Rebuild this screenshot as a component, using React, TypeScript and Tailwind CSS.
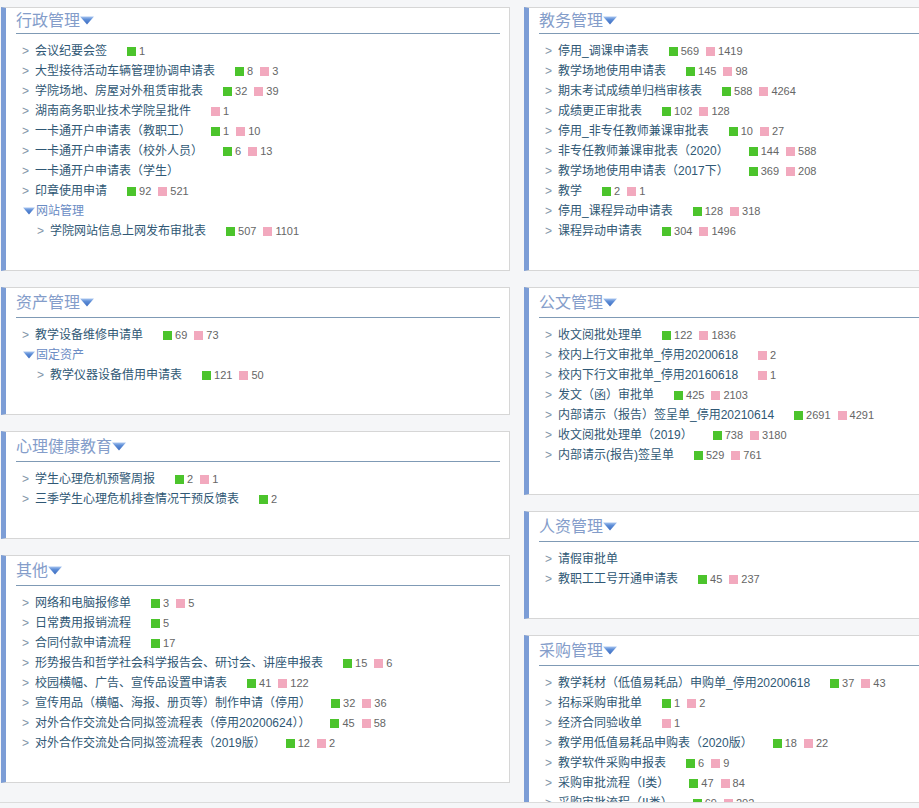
import React from 'react'

type Item = { name: string; g?: number; p?: number }
type Group = { group: string; items: Item[] }
type Entry = Item | Group

type Section = { title: string; entries: Entry[] }

const leftSections: Section[] = [
  {
    title: '行政管理',
    entries: [
      { name: '会议纪要会签', g: 1 },
      { name: '大型接待活动车辆管理协调申请表', g: 8, p: 3 },
      { name: '学院场地、房屋对外租赁审批表', g: 32, p: 39 },
      { name: '湖南商务职业技术学院呈批件', p: 1 },
      { name: '一卡通开户申请表（教职工）', g: 1, p: 10 },
      { name: '一卡通开户申请表（校外人员）', g: 6, p: 13 },
      { name: '一卡通开户申请表（学生）' },
      { name: '印章使用申请', g: 92, p: 521 },
      { group: '网站管理', items: [{ name: '学院网站信息上网发布审批表', g: 507, p: 1101 }] },
    ],
  },
  {
    title: '资产管理',
    entries: [
      { name: '教学设备维修申请单', g: 69, p: 73 },
      { group: '固定资产', items: [{ name: '教学仪器设备借用申请表', g: 121, p: 50 }] },
    ],
  },
  {
    title: '心理健康教育',
    entries: [
      { name: '学生心理危机预警周报', g: 2, p: 1 },
      { name: '三季学生心理危机排查情况干预反馈表', g: 2 },
    ],
  },
  {
    title: '其他',
    entries: [
      { name: '网络和电脑报修单', g: 3, p: 5 },
      { name: '日常费用报销流程', g: 5 },
      { name: '合同付款申请流程', g: 17 },
      { name: '形势报告和哲学社会科学报告会、研讨会、讲座申报表', g: 15, p: 6 },
      { name: '校园横幅、广告、宣传品设置申请表', g: 41, p: 122 },
      { name: '宣传用品（横幅、海报、册页等）制作申请（停用）', g: 32, p: 36 },
      { name: '对外合作交流处合同拟签流程表（停用20200624））', g: 45, p: 58 },
      { name: '对外合作交流处合同拟签流程表（2019版）', g: 12, p: 2 },
    ],
  },
]

const rightSections: Section[] = [
  {
    title: '教务管理',
    entries: [
      { name: '停用_调课申请表', g: 569, p: 1419 },
      { name: '教学场地使用申请表', g: 145, p: 98 },
      { name: '期末考试成绩单归档审核表', g: 588, p: 4264 },
      { name: '成绩更正审批表', g: 102, p: 128 },
      { name: '停用_非专任教师兼课审批表', g: 10, p: 27 },
      { name: '非专任教师兼课审批表（2020）', g: 144, p: 588 },
      { name: '教学场地使用申请表（2017下）', g: 369, p: 208 },
      { name: '教学', g: 2, p: 1 },
      { name: '停用_课程异动申请表', g: 128, p: 318 },
      { name: '课程异动申请表', g: 304, p: 1496 },
    ],
  },
  {
    title: '公文管理',
    entries: [
      { name: '收文阅批处理单', g: 122, p: 1836 },
      { name: '校内上行文审批单_停用20200618', p: 2 },
      { name: '校内下行文审批单_停用20160618', p: 1 },
      { name: '发文（函）审批单', g: 425, p: 2103 },
      { name: '内部请示（报告）签呈单_停用20210614', g: 2691, p: 4291 },
      { name: '收文阅批处理单（2019）', g: 738, p: 3180 },
      { name: '内部请示(报告)签呈单', g: 529, p: 761 },
    ],
  },
  {
    title: '人资管理',
    entries: [
      { name: '请假审批单' },
      { name: '教职工工号开通申请表', g: 45, p: 237 },
    ],
  },
  {
    title: '采购管理',
    entries: [
      { name: '教学耗材（低值易耗品）申购单_停用20200618', g: 37, p: 43 },
      { name: '招标采购审批单', g: 1, p: 2 },
      { name: '经济合同验收单', p: 1 },
      { name: '教学用低值易耗品申购表（2020版）', g: 18, p: 22 },
      { name: '教学软件采购申报表', g: 6, p: 9 },
      { name: '采购审批流程（I类）', g: 47, p: 84 },
      { name: '采购审批流程（II类）', g: 69, p: 202 },
    ],
  },
]

function DownTriangle({ w = 14, h = 9 }: { w?: number; h?: number }) {
  return (
    <svg width={w} height={h} viewBox="0 0 14 9" className="shrink-0">
      <defs>
        <linearGradient id="tri-grad" x1="0" y1="0" x2="0" y2="1">
          <stop offset="0" stopColor="#a9c6f0" />
          <stop offset="0.35" stopColor="#5f8fd8" />
          <stop offset="1" stopColor="#3c6cc0" />
        </linearGradient>
      </defs>
      <polygon points="0,0.5 14,0.5 7,8.5" fill="url(#tri-grad)" />
    </svg>
  )
}

function Row({ item, indent = false }: { item: Item; indent?: boolean }) {
  return (
    <li className={`flex items-center h-[20px] leading-[20px] whitespace-nowrap ${indent ? 'pl-[15px]' : ''}`}>
      <span className="w-[13px] shrink-0 text-[12px] text-[#8294a8]">&gt;</span>
      <span className="text-[12px] text-[#305875]">{item.name}</span>
      {(item.g !== undefined || item.p !== undefined) && (
        <span className="ml-5 flex items-center text-[11px] text-[#666]">
          {item.g !== undefined && (
            <span className="flex items-center mr-[7px]">
              <span className="w-[9px] h-[9px] bg-[#4cc42c] mr-[3px]" />
              {item.g}
            </span>
          )}
          {item.p !== undefined && (
            <span className="flex items-center">
              <span className="w-[9px] h-[9px] bg-[#f2a9be] mr-[3px]" />
              {item.p}
            </span>
          )}
        </span>
      )}
    </li>
  )
}

function Panel({ section, first = false }: { section: Section; first?: boolean }) {
  return (
    <div className="bg-white border border-[#d6d6d6] border-l-[5px] border-l-[#7c9dd6] pb-[29px] pl-[10px] pr-[9px] shrink-0">
      <div
        className={`flex items-center border-b border-[#7f9ab5] ${first ? 'h-[26px]' : 'h-[30px]'}`}
      >
        <span className="text-[16px] text-[#849dca] leading-[22px]">{section.title}</span>
        <DownTriangle />
      </div>
      <ul className="mt-[7px] pl-[6px]">
        {section.entries.map((e, i) =>
          'group' in e ? (
            <React.Fragment key={i}>
              <li className="flex items-center h-[20px] leading-[20px]">
                <span className="ml-[1px] mr-[1px]">
                  <DownTriangle w={12} h={8} />
                </span>
                <span className="text-[12px] text-[#6a8cc4]">{e.group}</span>
              </li>
              {e.items.map((it, j) => (
                <Row key={j} item={it} indent />
              ))}
            </React.Fragment>
          ) : (
            <Row key={i} item={e} />
          )
        )}
      </ul>
    </div>
  )
}

export default function App(): React.JSX.Element {
  return (
    <div className="w-[919px] h-[808px] overflow-hidden bg-[#f5f6f8] font-['Liberation_Sans','Noto_Sans_CJK_SC',sans-serif]">
      <div className="h-[803px] overflow-hidden border-b border-[#dcdcdc] pt-[7px] pl-[1px] flex gap-[14px]">
        <div className="w-[509px] shrink-0 flex flex-col gap-4">
          {leftSections.map((s, i) => (
            <Panel key={s.title} section={s} first={i === 0} />
          ))}
        </div>
        <div className="w-[509px] shrink-0 flex flex-col gap-4">
          {rightSections.map((s, i) => (
            <Panel key={s.title} section={s} first={i === 0} />
          ))}
        </div>
      </div>
    </div>
  )
}
